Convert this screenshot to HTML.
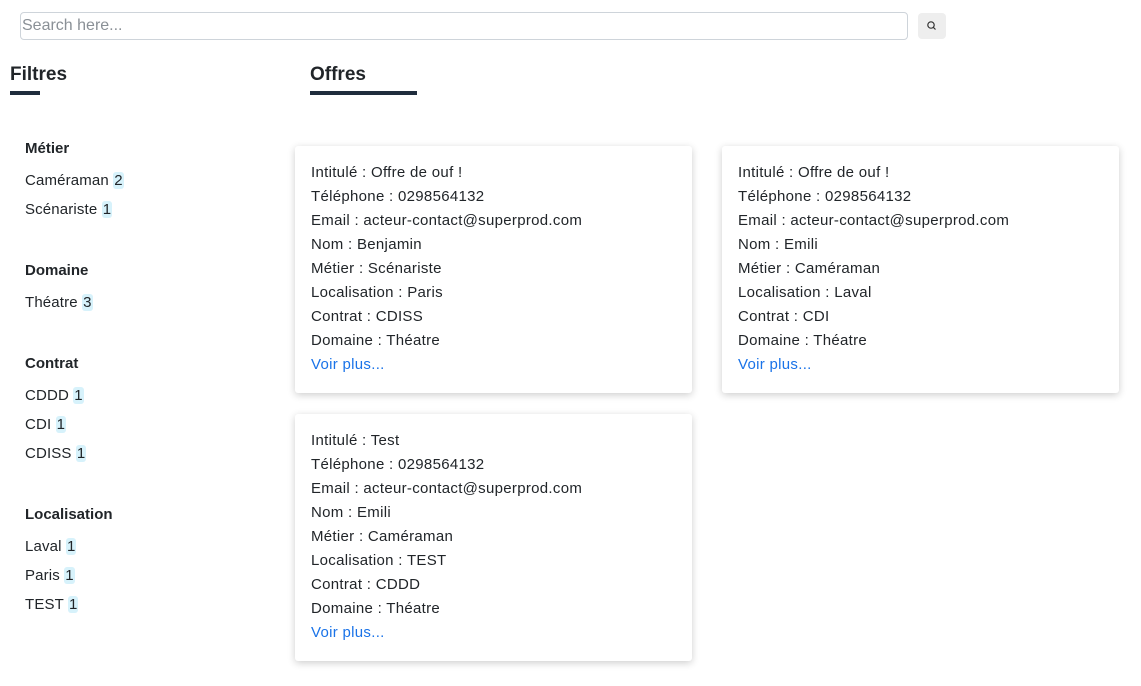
<!DOCTYPE html>
<html><head><meta charset="utf-8"><style>
body{margin:0;width:1141px;height:686px;background:#fff;font-family:"Liberation Sans",sans-serif;color:#212529;position:relative;overflow:hidden}
.inp{position:absolute;left:20px;top:12px;width:886px;height:26px;border:1px solid #ced4da;border-radius:4px;box-sizing:content-box}
.inp span{position:absolute;left:1px;top:4px;font-size:16px;color:#8a9096}
.btn{position:absolute;left:918px;top:13px;width:28px;height:26px;background:#eee;border-radius:4px}
h2{position:absolute;margin:0;font-size:19px;font-weight:bold;color:#212529}
.ul{position:absolute;height:4px;background:#1f2d3d}
.f{position:absolute;left:25px;font-size:15px;line-height:29px;letter-spacing:0.15px}
.f b{display:block;font-size:15px;margin-bottom:3px;letter-spacing:0}
.n{background:#d7f2fb;border-radius:3px;padding:0 1px}
.card{position:absolute;width:397px;height:247px;box-shadow:0 2px 8px rgba(0,0,0,.2);border-radius:3px;background:#fff;padding:15px 16px;box-sizing:border-box;font-size:15px;line-height:24px;letter-spacing:0.3px}
.card a{color:#1a73e8;text-decoration:none}
</style></head><body>
<div class="inp"><span>Search here...</span></div>
<div class="btn"><svg width="28" height="26" viewBox="0 0 28 26"><circle cx="13" cy="12" r="3.2" fill="none" stroke="#333" stroke-width="1.2"/><path d="M15.3 14.3l2.2 2.2" stroke="#333" stroke-width="1.2"/></svg></div>
<h2 style="left:10px;top:64px">Filtres</h2><div class="ul" style="left:10px;top:91px;width:30px"></div>
<h2 style="left:310px;top:64px">Offres</h2><div class="ul" style="left:310px;top:91px;width:107px"></div>
<div class="f" style="top:134px"><b>Métier</b>Caméraman <span class="n">2</span><br>Scénariste <span class="n">1</span></div>
<div class="f" style="top:256px"><b>Domaine</b>Théatre <span class="n">3</span></div>
<div class="f" style="top:349px"><b>Contrat</b>CDDD <span class="n">1</span><br>CDI <span class="n">1</span><br>CDISS <span class="n">1</span></div>
<div class="f" style="top:500px"><b>Localisation</b>Laval <span class="n">1</span><br>Paris <span class="n">1</span><br>TEST <span class="n">1</span></div>
<div class="card" style="left:295px;top:146px">Intitulé : Offre de ouf !<br>Téléphone : 0298564132<br>Email : acteur-contact@superprod.com<br>Nom : Benjamin<br>Métier : Scénariste<br>Localisation : Paris<br>Contrat : CDISS<br>Domaine : Théatre<br><a>Voir plus...</a></div>
<div class="card" style="left:722px;top:146px">Intitulé : Offre de ouf !<br>Téléphone : 0298564132<br>Email : acteur-contact@superprod.com<br>Nom : Emili<br>Métier : Caméraman<br>Localisation : Laval<br>Contrat : CDI<br>Domaine : Théatre<br><a>Voir plus...</a></div>
<div class="card" style="left:295px;top:414px">Intitulé : Test<br>Téléphone : 0298564132<br>Email : acteur-contact@superprod.com<br>Nom : Emili<br>Métier : Caméraman<br>Localisation : TEST<br>Contrat : CDDD<br>Domaine : Théatre<br><a>Voir plus...</a></div>
</body></html>
